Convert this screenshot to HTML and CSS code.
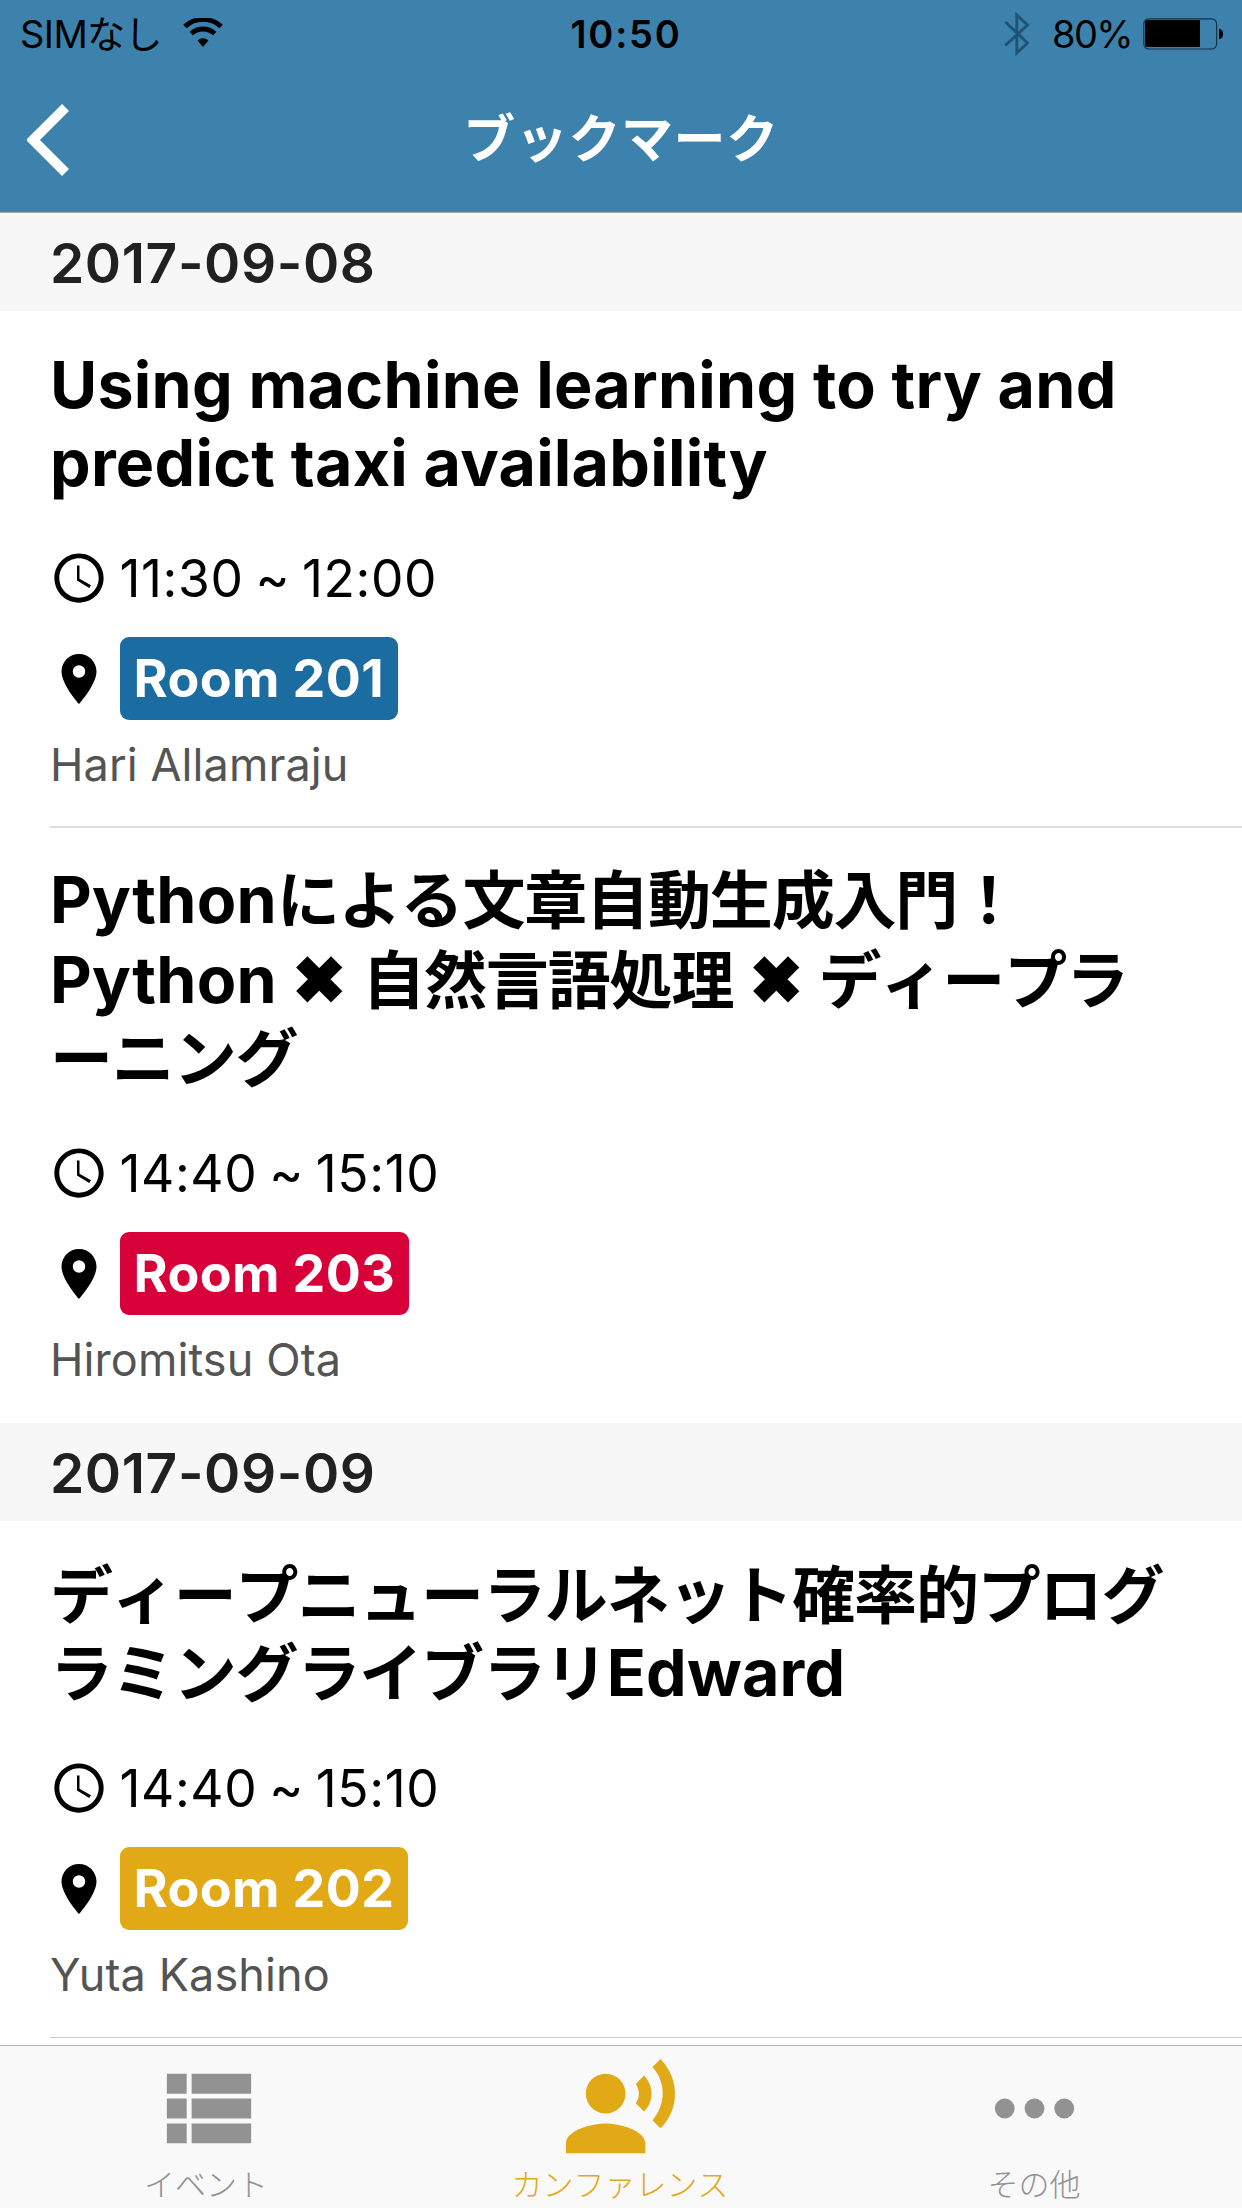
FILE: index.html
```html
<!DOCTYPE html>
<html lang="ja">
<head>
<meta charset="utf-8">
<title>ブックマーク</title>
<link rel="stylesheet" href="styles.css">
</head>
<body>
<svg width="0" height="0" class="sprite" aria-hidden="true">
  <symbol id="clock" viewBox="0 0 24 24"><path d="M11.99 2C6.47 2 2 6.48 2 12s4.47 10 9.99 10C17.52 22 22 17.52 22 12S17.52 2 11.99 2zM12 20c-4.42 0-8-3.58-8-8s3.58-8 8-8 8 3.58 8 8-3.58 8-8 8z" transform="translate(12 12) scale(.985) translate(-12 -12)"/><path d="M12.2 7H11.2v6l4.9 3 .7-1.1-4.6-2.6z"/></symbol>
  <symbol id="pin" viewBox="0 0 24 24"><path d="M12 2C8.13 2 5 5.13 5 9c0 5.25 7 13 7 13s7-7.75 7-13c0-3.87-3.13-7-7-7zm0 9.5a2.5 2.5 0 0 1 0-5 2.5 2.5 0 0 1 0 5z"/></symbol>
</svg>
<div class="screen">
  <header class="header">
    <div class="status">
      <div class="status-left">
        <span class="carrier">SIMなし</span>
        <svg class="wifi" viewBox="0 0 40 30"><path d="M1.9 8.6A26.5 26.5 0 0 1 38.1 8.6" fill="none" stroke="#000" stroke-width="4.8"/><path d="M8.2 15.6A17.5 17.5 0 0 1 31.8 15.6" fill="none" stroke="#000" stroke-width="4.8"/><path d="M14.6 22.4A8.2 8.2 0 0 1 25.4 22.4L20 29z"/></svg>
      </div>
      <span class="time">10:50</span>
      <div class="status-right">
        <svg class="bluetooth" viewBox="0 0 26 44"><path d="M1.2 9.8L23.5 31 12.8 41V3L23.5 13 1.2 33.5" fill="none" stroke="#1f5373" stroke-width="2.9"/></svg>
        <span class="percent">80%</span>
        <svg class="battery" viewBox="0 0 81 32"><rect x=".8" y=".8" width="72.8" height="30.2" rx="5" fill="none" stroke="#123549" stroke-width="1.2"/><rect x="2" y="2" width="55" height="27" rx="2.5"/><rect x="50" y="2" width="7" height="27"/><path d="M76 11c3 0 4 2.500 4 5s-1 5-4 5z"/></svg>
      </div>
    </div>
    <div class="nav">
      <svg class="back" viewBox="0 0 46 72"><path d="M38.500 3.500L6 36l32.500 32.500" fill="none" stroke="#fff" stroke-width="9.800"/></svg>
      <h1 class="nav-title">ブックマーク</h1>
    </div>
  </header>
  <main class="list">
    <h2 class="date">2017-09-08</h2>
    <article class="talk">
      <h3 class="talk-title"><span class="latin">Using machine learning to try and<br>predict taxi availability</span></h3>
      <div class="when"><svg class="icon"><use href="#clock"/></svg><span>11:30 ~ 12:00</span></div>
      <div class="where"><svg class="icon"><use href="#pin"/></svg><span class="room room-blue">Room 201</span></div>
      <p class="speaker">Hari Allamraju</p>
    </article>
    <article class="talk talk-last">
      <h3 class="talk-title"><span class="line line-tall"><span class="latin">Python</span>による文章自動生成入門！</span><span class="line"><span class="latin">Python ✖ </span>自然言語処理<span class="latin"> ✖ </span>ディープラ</span><span class="line">ーニング</span></h3>
      <div class="when"><svg class="icon"><use href="#clock"/></svg><span>14:40 ~ 15:10</span></div>
      <div class="where"><svg class="icon"><use href="#pin"/></svg><span class="room room-red">Room 203</span></div>
      <p class="speaker">Hiromitsu Ota</p>
    </article>
    <h2 class="date">2017-09-09</h2>
    <article class="talk talk-thin">
      <h3 class="talk-title"><span class="line">ディープニューラルネット確率的プログ</span><span class="line">ラミングライブラリ<span class="latin">Edward</span></span></h3>
      <div class="when"><svg class="icon"><use href="#clock"/></svg><span>14:40 ~ 15:10</span></div>
      <div class="where"><svg class="icon"><use href="#pin"/></svg><span class="room room-yellow">Room 202</span></div>
      <p class="speaker">Yuta Kashino</p>
    </article>
  </main>
  <nav class="tabs">
    <div class="tab">
      <svg class="tab-icon" viewBox="0 0 24 24"><path d="M4 14h4v-4H4v4zm0 5h4v-4H4v4zM4 9h4V5H4v4zm5 5h12v-4H9v4zm0 5h12v-4H9v4zM9 5v4h12V5H9z"/></svg>
      <span class="tab-label">イベント</span>
    </div>
    <div class="tab tab-active">
      <svg class="tab-icon" viewBox="0 0 24 24"><circle cx="9" cy="9" r="4"/><path d="M9 15c-2.670 0-8 1.340-8 4v2h16v-2c0-2.660-5.330-4-8-4zm7.760-9.640l-1.680 1.690c.84 1.180.84 2.710 0 3.890l1.680 1.690c2.020-2.020 2.020-5.070 0-7.270zM20.070 2l-1.630 1.630c2.770 3.020 2.770 7.560 0 10.740L20.070 16c3.900-3.890 3.910-9.950 0-14z"/></svg>
      <span class="tab-label">カンファレンス</span>
    </div>
    <div class="tab">
      <svg class="tab-icon" viewBox="0 0 24 24"><circle cx="6" cy="12" r="2"/><circle cx="12" cy="12" r="2"/><circle cx="18" cy="12" r="2"/></svg>
      <span class="tab-label">その他</span>
    </div>
  </nav>
</div>
</body>
</html>
```

FILE: styles.css
```css
* { box-sizing: border-box; }
body {
  margin: 0;
  background: #fff;
  color: #000;
  font-family: Inter, "Noto Sans CJK JP", sans-serif;
}
h1, h2, h3, p { margin: 0; }
svg { display: block; flex: none; }
.sprite { position: absolute; }
.screen {
  width: 1242px;
  height: 2208px;
  display: flex;
  flex-direction: column;
  overflow: hidden;
}

.header {
  height: 213px;
  flex: none;
  background: #3d81ad;
  border-bottom: 1px solid #a3a6a8;
}
.status {
  height: 67px;
  display: grid;
  grid-template-columns: 1fr auto 1fr;
  padding: 0 18px 0 20px;
  font-size: 38px;
  line-height: 68px;
}
.status-left { display: flex; }
.carrier { font-weight: 400; letter-spacing: -0.6px; }
.wifi { width: 40px; height: 30px; margin: 18px 0 0 21px; }
.time { margin-left: 8px; font-weight: 600; letter-spacing: 1.8px; }
.status-right { display: flex; justify-content: flex-end; }
.bluetooth { width: 26px; height: 44px; margin: 12px 22px 0 0; }
.percent { letter-spacing: -1.6px; margin-right: 11px; }
.battery { width: 81px; height: 32px; margin-top: 18px; }
.nav {
  height: 146px;
  display: grid;
  grid-template-columns: 1fr auto 1fr;
  align-items: center;
  padding: 0 27px;
}
.back { width: 46px; height: 72px; }
.nav-title {
  grid-column: 2;
  font-size: 52px;
  font-weight: 600;
  line-height: 72px;
  letter-spacing: 0.6px;
  font-kerning: none;
  color: #fff;
}

.list { flex: 1; min-height: 0; overflow: hidden; }
.date {
  height: 98px;
  padding-left: 50px;
  background: #f7f7f7;
  color: #212121;
  font-size: 55px;
  font-weight: 600;
  line-height: 101px;
  letter-spacing: 0.6px;
}
.talk {
  margin-left: 50px;
  padding: 35px 0 31px;
  border-bottom: 2px solid #dcdcdc;
}
.talk-last { padding: 33px 0; border-bottom: 0; }
.talk-thin { padding-bottom: 32px; border-bottom: 1px solid #c8c7cc; }
.talk-title {
  font-size: 63px;
  font-weight: 700;
  line-height: 78px;
  letter-spacing: -1.15px;
  font-kerning: none;
  white-space: nowrap;
}
.latin {
  font-size: 64.5px;
  line-height: 1;
  letter-spacing: 0.25px;
  font-kerning: normal;
}
.line { display: block; }
.line-tall { margin-bottom: 2px; }
.when {
  display: flex;
  height: 60px;
  margin-top: 46px;
  font-size: 51.5px;
  line-height: 60px;
  letter-spacing: 0.6px;
  word-spacing: -3.2px;
}
.icon { width: 60px; height: 60px; margin: 0 10.5px 0 -1px; }
.where { display: flex; align-items: center; margin-top: 29px; }
.room {
  height: 83px;
  padding: 0 14px;
  border-radius: 9px;
  color: #fff;
  font-size: 52px;
  font-weight: 700;
  line-height: 83px;
  letter-spacing: 0.4px;
}
.room-blue { background: #1b6ca0; }
.room-red { background: #d70038; }
.room-yellow { background: #e2a916; }
.speaker {
  margin-top: 15px;
  color: #545454;
  font-size: 45px;
  line-height: 60px;
  letter-spacing: 0.1px;
}

.tabs {
  height: 163px;
  flex: none;
  display: grid;
  grid-template-columns: repeat(3, 1fr);
  background: #f9f9f9;
  border-top: 1px solid #b2b2b2;
}
.tab {
  display: flex;
  flex-direction: column;
  align-items: center;
  padding: 3px 2px 0 0;
  color: #929292;
}
.tab-active { color: #e2a916; }
.tab-icon { width: 119px; height: 119px; fill: currentColor; }
.tab-label {
  font-size: 31px;
  font-weight: 300;
  line-height: 34px;
  font-kerning: none;
}
```
